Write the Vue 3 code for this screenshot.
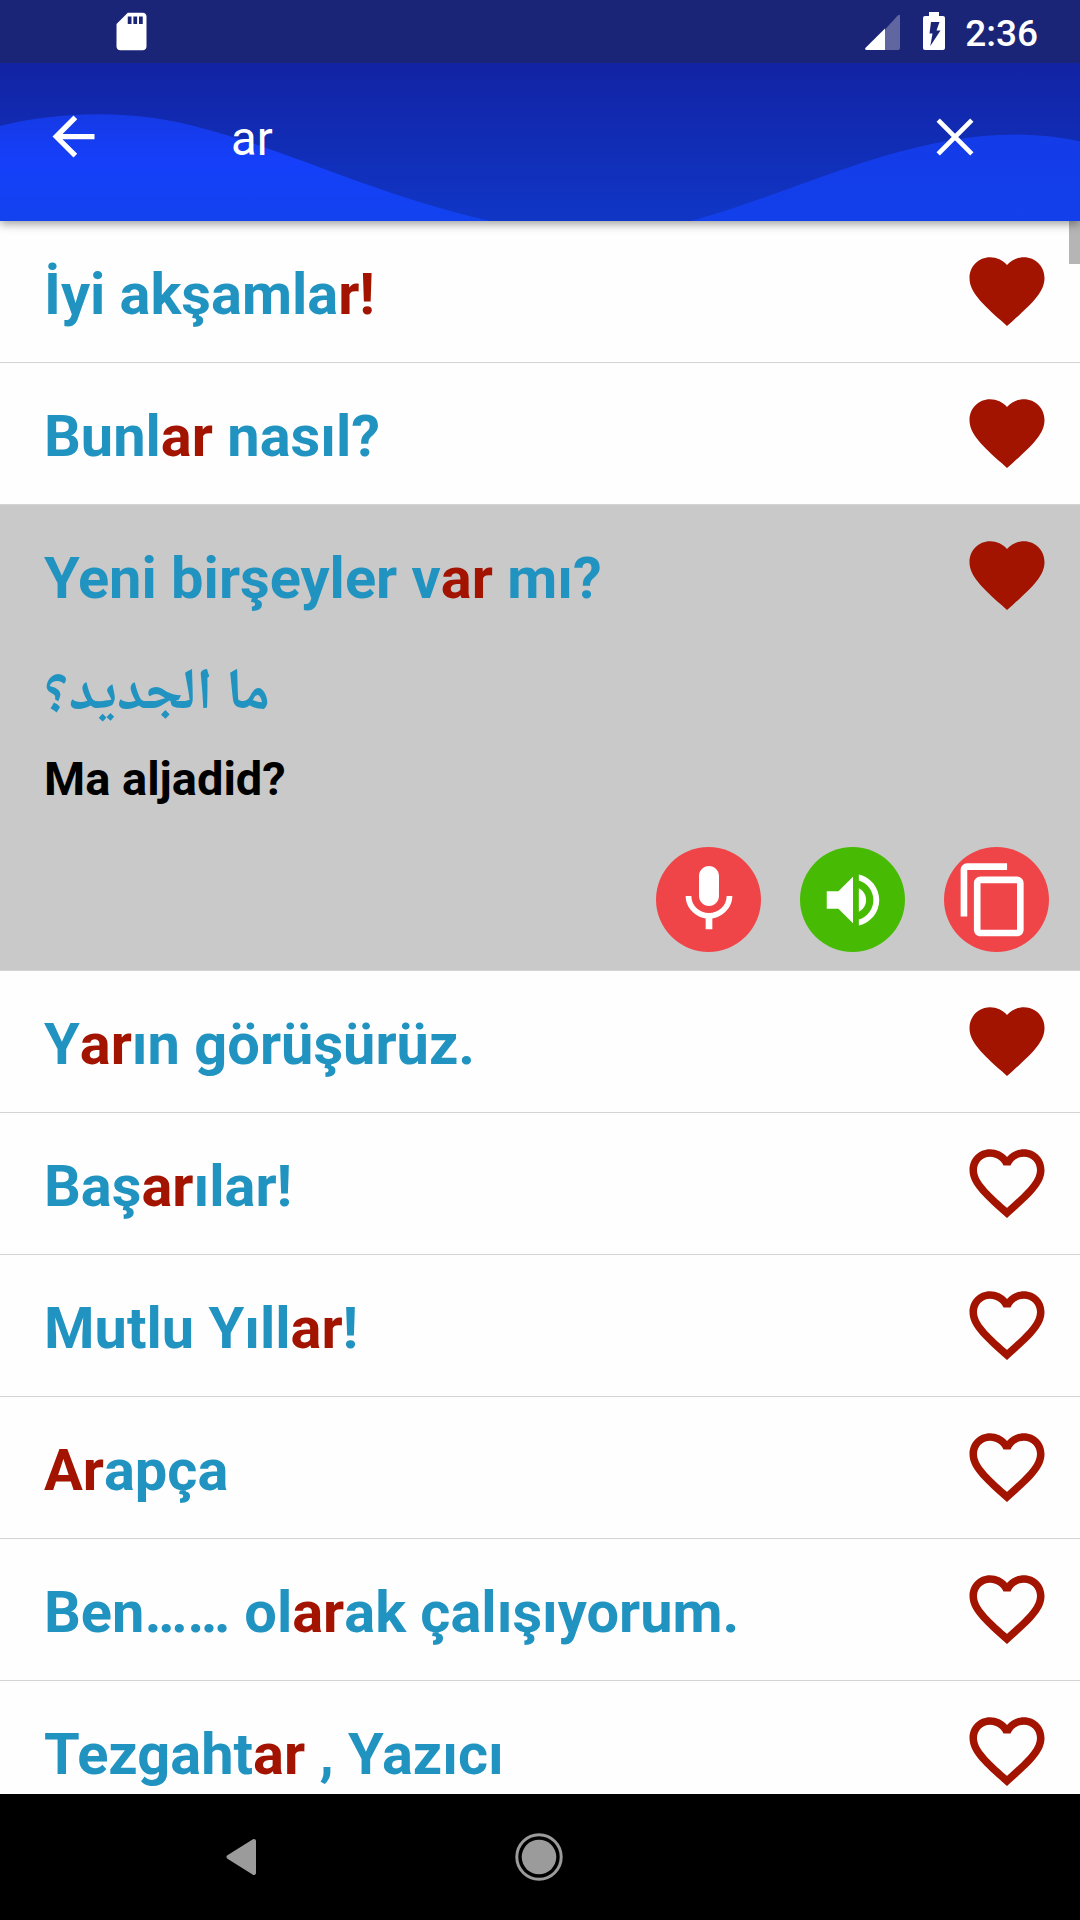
<script setup>
import { ref } from 'vue';

const query = ref('ar');
const expanded = ref(2);

const phrases = ref([
  { text: 'İyi akşamlar!', favorite: true },
  { text: 'Bunlar nasıl?', favorite: true },
  { text: 'Yeni birşeyler var mı?', arabic: 'ما الجديد؟', reading: 'Ma aljadid?', favorite: true },
  { text: 'Yarın görüşürüz.', favorite: true },
  { text: 'Başarılar!', favorite: false },
  { text: 'Mutlu Yıllar!', favorite: false },
  { text: 'Arapça', favorite: false },
  { text: 'Ben…… olarak çalışıyorum.', favorite: false },
  { text: 'Tezgahtar , Yazıcı', favorite: false },
]);

// split a phrase in before / match / after
const split = (text) => {
  const start = text.toLowerCase().indexOf(query.value);
  if (!query.value || start < 0) return [text, '', ''];
  const end = start + query.value.length;
  return [text.slice(0, start), text.slice(start, end), text.slice(end)];
};

const toggle = (i) => {
  expanded.value = expanded.value === i ? -1 : i;
};
</script>

<template>
  <div class="screen">
    <header class="top">
      <div class="status-bar">
        <svg class="sd" viewBox="0 0 24 24"><path d="M18 2h-8L4.02 8 4 20c0 1.1.9 2 2 2h12c1.1 0 2-.9 2-2V4c0-1.1-.9-2-2-2zm-6 6h-2V4h2v4zm3 0h-2V4h2v4zm3 0h-2V4h2v4z" /></svg>
        <div class="status-right">
          <svg class="signal" viewBox="0 0 35 36">
            <path d="M20 15.5 33 1.3Q35 0 35 2V34Q35 36 33 36H20z" opacity=".3" />
            <path d="M20 14.500V36H2Q-1 36 .6 33.800z" />
          </svg>
          <svg class="battery" viewBox="0 0 22 38">
            <path fill-rule="evenodd" d="M6 0h10v4h4q2 0 2 2v30q0 2-2 2H2q-2 0-2-2V6q0-2 2-2h4zM8 10 6.500 21.500H9.500L7.300 34 17.500 18.500H13.500L16.500 10z" />
          </svg>
          <span class="clock">2:36</span>
        </div>
      </div>
      <div class="app-bar">
        <svg class="wave" viewBox="0 0 1080 158" preserveAspectRatio="none">
          <defs>
            <linearGradient id="wave-left" x1="0" y1="50" x2="0" y2="158" gradientUnits="userSpaceOnUse">
              <stop offset="0" stop-color="#1539e4" />
              <stop offset=".45" stop-color="#153ffa" />
              <stop offset="1" stop-color="#1243ee" />
            </linearGradient>
            <linearGradient id="wave-right" x1="0" y1="70" x2="0" y2="158" gradientUnits="userSpaceOnUse">
              <stop offset="0" stop-color="#143be8" />
              <stop offset="1" stop-color="#1240ea" />
            </linearGradient>
          </defs>
          <path fill="url(#wave-left)" d="M0 63C65 47 140 47 205 66C290 88 370 130 490 158H0z" />
          <path fill="url(#wave-right)" d="M691 158C790 132 900 71 1018 71.500Q1052 72 1080 78.500V158z" />
        </svg>
        <svg class="back" viewBox="0 0 24 24"><path d="M20 11H7.830l5.590-5.590L12 4l-8 8 8 8 1.410-1.410L7.830 13H20v-2z" /></svg>
        <span class="query">{{ query }}</span>
        <svg class="close" viewBox="0 0 38 38" @click="query = ''"><path d="M2.200 2.200 35.800 35.800M35.800 2.200 2.200 35.800" /></svg>
      </div>
    </header>

    <main class="list">
      <div class="scrollbar"></div>
      <article
        v-for="(item, i) in phrases"
        :key="item.text"
        class="item"
        :class="{ open: expanded === i }"
        @click="toggle(i)"
      >
        <div class="row">
          <p class="phrase"><span>{{ split(item.text)[0] }}</span><span class="match">{{ split(item.text)[1] }}</span><span>{{ split(item.text)[2] }}</span></p>
          <svg class="heart" viewBox="0 0 24 24" @click.stop="item.favorite = !item.favorite">
            <path v-if="item.favorite" d="M12 21.350l-1.450-1.320C5.400 15.360 2 12.280 2 8.500 2 5.420 4.420 3 7.500 3c1.740 0 3.410.810 4.500 2.090C13.090 3.810 14.760 3 16.500 3 19.580 3 22 5.420 22 8.500c0 3.780-3.400 6.860-8.550 11.540L12 21.350z" />
            <path v-else d="M16.500 3c-1.740 0-3.410.810-4.500 2.090C10.910 3.810 9.240 3 7.500 3 4.420 3 2 5.420 2 8.500c0 3.780 3.400 6.860 8.550 11.540L12 21.350l1.450-1.320C18.600 15.360 22 12.280 22 8.500 22 5.420 19.580 3 16.500 3zm-4.400 15.550l-.1.1-.1-.1C7.140 14.240 4 11.390 4 8.500 4 6.500 5.500 5 7.500 5c1.540 0 3.040.990 3.570 2.360h1.870C13.460 5.990 14.960 5 16.500 5c2 0 3.500 1.500 3.500 3.500 0 2.890-3.140 5.740-7.900 10.050z" />
          </svg>
        </div>
        <div v-if="expanded === i && item.arabic" class="details">
          <p class="arabic" lang="ar"><bdi>{{ item.arabic }}</bdi></p>
          <p class="reading">{{ item.reading }}</p>
          <div class="actions">
            <button class="action red">
              <svg class="mic" viewBox="0 0 24 24"><path d="M12 15c1.660 0 2.990-1.340 2.990-3L15 6c0-1.660-1.340-3-3-3S9 4.340 9 6v6c0 1.660 1.340 3 3 3zm5.300-3c0 3-2.540 5.100-5.300 5.100S6.700 15 6.700 12H5c0 3.420 2.720 6.230 6 6.720V22h2v-3.280c3.280-.480 6-3.300 6-6.720h-1.700z" /></svg>
            </button>
            <button class="action green">
              <svg class="volume" viewBox="0 0 24 24"><path d="M3 9v6h4l5 5V4L7 9H3zm13.500 3c0-1.770-1.020-3.290-2.500-4.030v8.050c1.480-.730 2.500-2.250 2.500-4.020zM14 3.230v2.060c2.890.860 5 3.540 5 6.710s-2.110 5.850-5 6.710v2.060c4.010-.910 7-4.490 7-8.770s-2.990-7.860-7-8.770z" /></svg>
            </button>
            <button class="action red">
              <svg class="copy" viewBox="0 0 24 24"><path d="M16 1H4c-1.100 0-2 .9-2 2v14h2V3h12V1zm3 4H8c-1.100 0-2 .9-2 2v14c0 1.100.9 2 2 2h11c1.100 0 2-.9 2-2V7c0-1.100-.9-2-2-2zm0 16H8V7h11v14z" /></svg>
            </button>
          </div>
        </div>
      </article>
    </main>

    <nav class="nav-bar">
      <svg class="nav-back" viewBox="0 0 31 36"><path d="M28 2 2.500 18 28 34z" /></svg>
      <svg class="nav-home" viewBox="0 0 48 48">
        <circle cx="24" cy="24" r="17.300" />
        <circle class="ring" cx="24" cy="24" r="22.200" />
      </svg>
    </nav>
  </div>
</template>

<style>
body {
  margin: 0;
  background: #fff;
}
</style>

<style scoped>
.screen {
  width: 1080px;
  height: 1920px;
  display: flex;
  flex-direction: column;
  overflow: hidden;
  background: #fefefe;
  font-family: Roboto, "DejaVu Sans", sans-serif;
}

svg {
  display: block;
  flex: none;
  fill: #fff;
}

p {
  margin: 0;
}

.top {
  flex: none;
  position: relative;
  z-index: 1;
  box-shadow: 0 3px 9px rgba(0, 0, 0, 0.38);
}

.status-bar {
  height: 63px;
  box-sizing: border-box;
  padding: 0 42px 0 109px;
  display: flex;
  justify-content: space-between;
  background: #1b2577;
}

.sd {
  width: 45px;
  height: 45px;
  margin-top: 9px;
}

.status-right {
  display: flex;
  align-items: flex-start;
}

.signal {
  width: 35px;
  height: 36px;
  margin: 14px 23px 0 0;
}

.battery {
  width: 22px;
  height: 38px;
  margin: 12px 20px 0 0;
}

.clock {
  margin-top: 12px;
  color: #fff;
  font-size: 37px;
  font-weight: 500;
  line-height: 43px;
}

.app-bar {
  height: 158px;
  box-sizing: border-box;
  padding: 0 106px 11px 42px;
  display: flex;
  align-items: center;
  position: relative;
  background: linear-gradient(#1223a4, #1036c6);
}

.wave {
  position: absolute;
  inset: 0;
  width: 100%;
  height: 100%;
}

.back {
  width: 63px;
  height: 63px;
  position: relative;
}

.query {
  flex: 1;
  position: relative;
  padding: 4px 0 0 126px;
  color: #fff;
  font-size: 47.25px;
  line-height: 56px;
}

.close {
  width: 38px;
  height: 38px;
  position: relative;
  stroke: #fff;
  stroke-width: 4.7;
}

.list {
  flex: 1;
  min-height: 0;
  position: relative;
  overflow: hidden;
}

.scrollbar {
  position: absolute;
  top: 0;
  right: 0;
  width: 11px;
  height: 43px;
  background: #b5b5b5;
}

.item {
  border-bottom: 1px solid #d4d4d4;
}

.item.open {
  background: #c9c9c9;
}

.row {
  height: 141px;
  box-sizing: border-box;
  padding: 0 28px 0 44px;
  display: flex;
  justify-content: space-between;
  align-items: center;
}

.phrase {
  padding-top: 5px;
  color: #2193c0;
  font-size: 57.75px;
  font-weight: 700;
  line-height: 68px;
  white-space: nowrap;
}

.match {
  display: inline-block;
  color: #a21300;
}

.heart {
  width: 90px;
  height: 90px;
  margin-bottom: 1px;
  fill: #a21300;
}

.details {
  height: 324px;
  box-sizing: border-box;
  padding: 0 31px 18px 44px;
  display: flex;
  flex-direction: column;
}

.arabic {
  height: 98px;
  color: #2193c0;
  font-family: "Noto Naskh Arabic", "DejaVu Sans", sans-serif;
  font-size: 58.3px;
  font-weight: 700;
  line-height: 102px;
  white-space: nowrap;
}

.reading {
  color: #000;
  font-size: 47px;
  font-weight: 700;
  line-height: 70px;
}

.actions {
  margin-top: auto;
  display: flex;
  justify-content: flex-end;
  gap: 39px;
}

.action {
  width: 105px;
  height: 105px;
  padding: 0;
  border: 0;
  border-radius: 50%;
  display: flex;
  align-items: center;
  justify-content: center;
}

.red {
  background: #f04548;
}

.green {
  background: #47bb04;
}

.mic {
  width: 80px;
  height: 80px;
  margin-bottom: 7px;
}

.volume {
  width: 70px;
  height: 70px;
}

.copy {
  width: 79.6px;
  height: 79.6px;
  margin-right: 5px;
}

.nav-bar {
  flex: none;
  height: 126px;
  padding-left: 226px;
  display: flex;
  align-items: center;
  background: #000;
}

.nav-bar svg {
  fill: #9b9b9b;
}

.nav-back {
  width: 31px;
  height: 36px;
  stroke: #9b9b9b;
  stroke-width: 4;
  stroke-linejoin: round;
}

.nav-home {
  width: 48px;
  height: 48px;
  margin: 0 0 1px 258px;
}

.nav-bar .ring {
  fill: none;
  stroke: #9b9b9b;
  stroke-width: 3;
}
</style>
